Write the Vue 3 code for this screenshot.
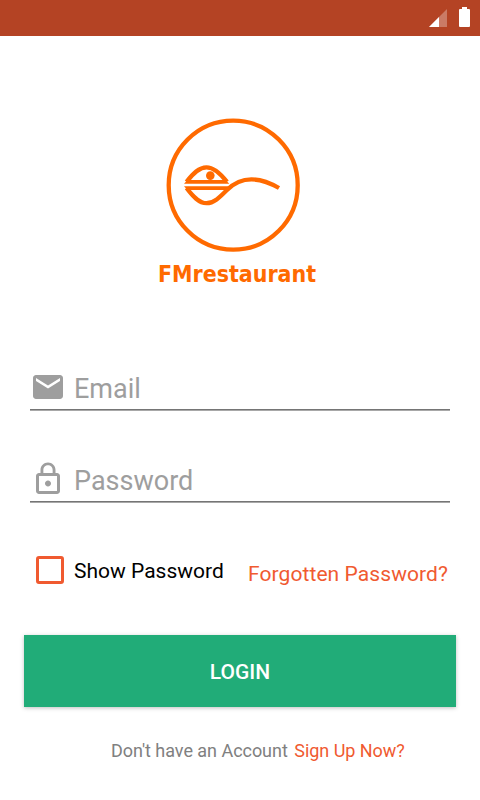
<template>
  <div class="login-page">
    <!-- status bar -->
    <header class="status-bar">
      <svg class="signal-icon" viewBox="0 0 18 18">
        <path d="M18 0V18H0Z" fill="#fff" fill-opacity="0.3" />
        <path d="M10 8V18H0Z" fill="#fff" />
      </svg>
      <svg class="battery-icon" viewBox="0 0 11 20">
        <path d="M3 0h5v2h2q1 0 1 1v16q0 1-1 1H1q-1 0-1-1V3q0-1 1-1h2z" fill="#fff" />
      </svg>
    </header>

    <main class="content">
      <!-- logo -->
      <svg class="logo" viewBox="0 0 170 180">
        <circle cx="78.2" cy="75.2" r="64.5" class="logo-line" />
        <path d="M31.5 71.8C38 63.5 44 57.3 51.5 57.3C59 57.3 65.5 63.5 72 71.8" class="logo-line" />
        <path d="M29 73.8L32.5 70H70.5L74.3 73.8Z" class="logo-fill" />
        <circle cx="55.3" cy="65.6" r="4.3" class="logo-fill" />
        <path d="M29 76.2H76L72 80H32.5Z" class="logo-fill" />
        <path d="M31.5 78C38 86.5 44 93.2 51.5 93.2C59 93.2 65 87 72 80C86 66 103 66 124 78" class="logo-line" />
        <text x="3" y="172" textLength="158" lengthAdjust="spacingAndGlyphs" class="logo-text">FMrestaurant</text>
      </svg>

      <form class="login-form" @submit.prevent>
        <label class="field">
          <svg class="field-icon" viewBox="0 0 24 24">
            <path d="M20 4H4c-1.1 0-2 .9-2 2v12c0 1.1.9 2 2 2h16c1.1 0 2-.9 2-2V6c0-1.1-.9-2-2-2zm0 4l-8 5-8-5V6l8 5 8-5v2z" />
          </svg>
          <input v-model="email" type="email" placeholder="Email" />
        </label>

        <label class="field">
          <svg class="field-icon" viewBox="0 0 24 24">
            <path d="M12 17c1.1 0 2-.9 2-2s-.9-2-2-2-2 .9-2 2 .9 2 2 2zm6-9h-1V6c0-2.76-2.24-5-5-5S7 3.24 7 6v2H6c-1.1 0-2 .9-2 2v10c0 1.1.9 2 2 2h12c1.1 0 2-.9 2-2V10c0-1.1-.9-2-2-2zM8.9 6c0-1.71 1.39-3.1 3.1-3.1s3.1 1.39 3.1 3.1v2H8.9V6zM18 20H6V10h12v10z" />
          </svg>
          <input v-model="password" :type="showPassword ? 'text' : 'password'" placeholder="Password" />
        </label>

        <div class="options">
          <label class="show-password">
            <input v-model="showPassword" type="checkbox" />
            <span>Show Password</span>
          </label>
          <a class="forgot">Forgotten Password?</a>
        </div>

        <button class="login-btn" type="submit">LOGIN</button>
      </form>

      <p class="signup">
        <span>Don't have an Account</span>
        <a>Sign Up Now?</a>
      </p>
    </main>
  </div>
</template>

<script setup>
import { ref } from 'vue'

const email = ref('')
const password = ref('')
const showPassword = ref(false)
</script>

<style>
body {
  margin: 0;
  background: #fff;
}
</style>

<style scoped>
.login-page {
  height: 800px;
  overflow: hidden;
  background: #fff;
  font-family: Roboto, sans-serif;
}

.status-bar {
  display: flex;
  justify-content: flex-end;
  gap: 12px;
  box-sizing: border-box;
  height: 36px;
  padding: 7px 10px 0 0;
  background: #b44324;
}

.signal-icon {
  width: 18px;
  height: 18px;
  margin-top: 2px;
}

.battery-icon {
  width: 11px;
  height: 20px;
}

.content {
  padding: 74px 24px 0;
}

.logo {
  display: block;
  width: 170px;
  height: 180px;
  margin-left: 131px;
}

.logo-line {
  fill: none;
  stroke: #ff6a00;
  stroke-width: 4.3;
}

.logo-fill {
  fill: #ff6a00;
}

.logo-text {
  fill: #ff6a00;
  font-family: "DejaVu Sans Condensed", "DejaVu Sans", sans-serif;
  font-size: 23px;
  font-weight: bold;
}

.login-form {
  padding-top: 69px;
}

.field {
  display: flex;
  align-items: center;
  box-sizing: border-box;
  height: 52px;
  margin: 0 6px 40px;
  border-bottom: 1px solid #a8a8a8;
  box-shadow: inset 0 -1px #757575;
}

.field-icon {
  flex: none;
  width: 36px;
  height: 36px;
  margin-top: 5px;
  fill: #9e9e9e;
}

.field input {
  flex: 1;
  min-width: 0;
  margin: 9px 0 0 8px;
  padding: 0;
  border: none;
  outline: none;
  background: none;
  color: #222;
  font-family: inherit;
  font-size: 27px;
}

.field input::placeholder {
  color: #9e9e9e;
  opacity: 1;
}

.options {
  display: flex;
  justify-content: space-between;
  height: 92px;
  margin: 0 8px 0 12px;
  font-size: 21px;
  line-height: 24px;
}

.show-password {
  display: flex;
  align-items: center;
  gap: 10px;
  height: 28px;
  margin-top: 14px;
  color: #000;
}

.show-password input {
  appearance: none;
  width: 28px;
  height: 28px;
  margin: 0 0 2px;
  border: 3px solid #f05a30;
  border-radius: 3px;
}

.show-password input:checked {
  background: #f05a30;
}

.forgot {
  margin-top: 19px;
  color: #f05a30;
  letter-spacing: 0.08px;
}

.login-btn {
  display: block;
  width: 100%;
  height: 72px;
  padding: 2px 0 0;
  border: none;
  background: #21ac78;
  box-shadow: 0 1px 4px rgba(0, 0, 0, 0.25);
  color: #fff;
  font-family: inherit;
  font-size: 21px;
  font-weight: 500;
}

.signup {
  display: flex;
  gap: 6.5px;
  margin: 33px 0 0 87px;
  color: #808080;
  font-size: 18px;
  line-height: 21px;
  letter-spacing: -0.04px;
}

.signup a {
  color: #f05a30;
}
</style>
